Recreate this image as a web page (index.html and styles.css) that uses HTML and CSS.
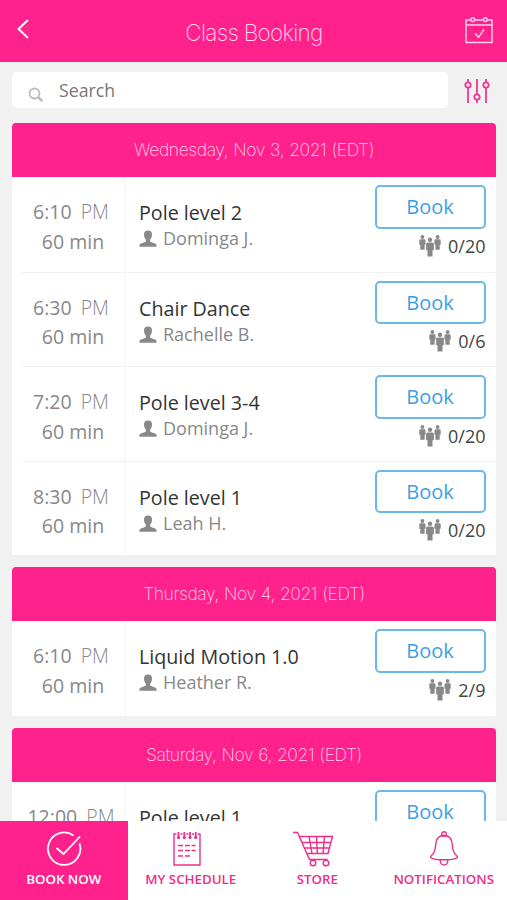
FILE: index.html
```html
<!DOCTYPE html>
<html lang="en">
<head>
    <meta charset="UTF-8">
    <meta name="viewport" content="width=device-width, initial-scale=1.0">
    <title>Class Booking</title>
    <link rel="stylesheet" href="styles.css">
</head>
<body>
    <svg class="icon-defs">
        <symbol id="person" viewBox="0 0 18 17">
            <path d="M9 .5C6.200.5 4.900 2 5 4.800c.1 2.200.7 3.600 1.800 4.600v2.300L2 13.500C.7 14.100.3 14.800.3 16.700h17.400c0-1.900-.4-2.600-1.700-3.200l-4.800-1.800V9.400c1.100-1 1.700-2.400 1.800-4.600C13.100 2 11.800.5 9 .5z"/>
        </symbol>
        <symbol id="group" viewBox="0 0 22 22">
            <circle cx="3.400" cy="2" r="1.900"/>
            <circle cx="18.600" cy="2" r="1.900"/>
            <circle cx="11" cy="4.800" r="2.200"/>
            <path d="M1.500 4.200h3.800q1.200 0 1.200 1.300v4.300H5.600v5H1.300v-5H.3V5.500q0-1.300 1.200-1.300z"/>
            <path d="M16.700 4.200h3.800q1.200 0 1.200 1.300v4.300h-1v5h-4.300v-5h-.9V5.500q0-1.300 1.200-1.300z"/>
            <path d="M8.600 7.500h4.800q1.500 0 1.500 1.500v6.200h-1.400v6.300h-5v-6.300H7.100V9q0-1.500 1.500-1.500z"/>
        </symbol>
    </svg>

    <div class="app">
        <header class="top-bar">
            <svg class="back-icon" viewBox="0 0 12 20"><path d="M11 1L1.500 10 11 19"/></svg>
            <h1>Class Booking</h1>
            <svg class="calendar-icon" viewBox="0 0 28 28">
                <path d="M5.500 4H1v22.500h26V4h-4.500M10 4h8M1 9h26M10 17.300l3.500 4 5.500-8"/>
                <circle cx="7.700" cy="3.600" r="1.900"/>
                <circle cx="20.300" cy="3.600" r="1.900"/>
            </svg>
        </header>

        <main class="content">
            <div class="search-row">
                <div class="search-box">
                    <svg class="search-icon" viewBox="0 0 16 16"><circle cx="6.500" cy="6.500" r="5"/><path class="handle" d="M10.300 10.300l4 3.900"/></svg>
                    <span>Search</span>
                </div>
                <svg class="filter-icon" viewBox="0 0 26 26">
                    <path d="M4 1v3M4 9.500V25M13 1v15M13 22v3M22 1v3M22 9.500V25"/>
                    <circle cx="4" cy="7" r="2.700"/>
                    <circle cx="13" cy="19" r="2.700"/>
                    <circle cx="22" cy="7" r="2.700"/>
                </svg>
            </div>

            <section class="day">
                <h2>Wednesday, Nov 3, 2021 (EDT)</h2>
                <div class="class-row">
                    <div class="time">
                        <div>6:10 <span class="period">PM</span></div>
                        <div class="duration">60 min</div>
                    </div>
                    <div class="details">
                        <div class="name">Pole level 2</div>
                        <div class="teacher"><svg><use href="#person"/></svg>Dominga J.</div>
                    </div>
                    <div class="booking">
                        <button class="book">Book</button>
                        <div class="spots"><svg><use href="#group"/></svg>0/20</div>
                    </div>
                </div>
                <div class="class-row">
                    <div class="time">
                        <div>6:30 <span class="period">PM</span></div>
                        <div class="duration">60 min</div>
                    </div>
                    <div class="details">
                        <div class="name">Chair Dance</div>
                        <div class="teacher"><svg><use href="#person"/></svg>Rachelle B.</div>
                    </div>
                    <div class="booking">
                        <button class="book">Book</button>
                        <div class="spots"><svg><use href="#group"/></svg>0/6</div>
                    </div>
                </div>
                <div class="class-row">
                    <div class="time">
                        <div>7:20 <span class="period">PM</span></div>
                        <div class="duration">60 min</div>
                    </div>
                    <div class="details">
                        <div class="name">Pole level 3-4</div>
                        <div class="teacher"><svg><use href="#person"/></svg>Dominga J.</div>
                    </div>
                    <div class="booking">
                        <button class="book">Book</button>
                        <div class="spots"><svg><use href="#group"/></svg>0/20</div>
                    </div>
                </div>
                <div class="class-row">
                    <div class="time">
                        <div>8:30 <span class="period">PM</span></div>
                        <div class="duration">60 min</div>
                    </div>
                    <div class="details">
                        <div class="name">Pole level 1</div>
                        <div class="teacher"><svg><use href="#person"/></svg>Leah H.</div>
                    </div>
                    <div class="booking">
                        <button class="book">Book</button>
                        <div class="spots"><svg><use href="#group"/></svg>0/20</div>
                    </div>
                </div>
            </section>

            <section class="day">
                <h2>Thursday, Nov 4, 2021 (EDT)</h2>
                <div class="class-row">
                    <div class="time">
                        <div>6:10 <span class="period">PM</span></div>
                        <div class="duration">60 min</div>
                    </div>
                    <div class="details">
                        <div class="name">Liquid Motion 1.0</div>
                        <div class="teacher"><svg><use href="#person"/></svg>Heather R.</div>
                    </div>
                    <div class="booking">
                        <button class="book">Book</button>
                        <div class="spots"><svg><use href="#group"/></svg>2/9</div>
                    </div>
                </div>
            </section>

            <section class="day">
                <h2>Saturday, Nov 6, 2021 (EDT)</h2>
                <div class="class-row">
                    <div class="time">
                        <div>12:00 <span class="period">PM</span></div>
                    </div>
                    <div class="details">
                        <div class="name">Pole level 1</div>
                    </div>
                    <div class="booking">
                        <button class="book">Book</button>
                    </div>
                </div>
            </section>
        </main>

        <nav class="tabs">
            <div class="tab active">
                <svg viewBox="0 0 36 36">
                    <path class="thick" d="M27.500 4.500A16.200 16.200 0 1 0 33.500 12.500M10.500 17l7 6L34 5.500"/>
                </svg>
                BOOK NOW
            </div>
            <div class="tab">
                <svg class="schedule" viewBox="0 0 36 36">
                    <path d="M7.500 3H5v31h26V3h-2.300M11.500 3h2M17.300 3h2M23 3h2"/>
                    <path class="thick" d="M9.500 1v6M15.300 1v6M21 1v6M26.700 1v6"/>
                    <circle class="dot" cx="9.500" cy="6.500" r="1.600"/>
                    <circle class="dot" cx="15.300" cy="6.500" r="1.600"/>
                    <circle class="dot" cx="21" cy="6.500" r="1.600"/>
                    <circle class="dot" cx="26.700" cy="6.500" r="1.600"/>
                    <path d="M9 14.500h5M16 14.500h5M22.500 14.500h4M9 19.500h5M16 19.500h5M22.500 19.500h4M9 25h5M16 25h5"/>
                </svg>
                MY SCHEDULE
            </div>
            <div class="tab">
                <svg class="cart" viewBox="0 0 42 36">
                    <path d="M1 1.500h4.500l12 27h18M7.500 5.500h33l-4.500 17H15M10 11.500h29M12.500 17h25M17 5.500l3 17M24.500 5.500l.8 17M32.500 5.500l-1.500 17"/>
                    <circle cx="21" cy="32" r="2.800"/>
                    <circle cx="34" cy="32" r="2.800"/>
                </svg>
                STORE
            </div>
            <div class="tab">
                <svg viewBox="0 0 36 36">
                    <path d="M18 4.500c-6 0-8 4-8.300 9-.3 7-2.200 9-5.200 12.200 0 2 6.500 3 13.500 3s13.500-1 13.500-3c-3-3.200-4.900-5.200-5.200-12.200-.3-5-2.300-9-8.300-9zM14.300 29v1.500q.5 3.500 3.700 3.500t3.700-3.500V29"/>
                    <circle cx="18" cy="3" r="2.300"/>
                </svg>
                NOTIFICATIONS
            </div>
        </nav>
    </div>
</body>
</html>
```

FILE: styles.css
```css
* {
    box-sizing: border-box;
    padding: 0;
    margin: 0;
}

body {
    font-family: "Open Sans", sans-serif;
    background-color: #f1f1f1;
    color: #333;
}

svg {
    fill: none;
    stroke: currentColor;
    flex-shrink: 0;
}

.icon-defs {
    display: none;
}

.app {
    display: flex;
    flex-direction: column;
    height: 100vh;
    overflow: hidden;
}

.top-bar {
    display: flex;
    flex: none;
    align-items: center;
    justify-content: space-between;
    height: 61.5px;
    padding: 3px 14px 0 17px;
    background-color: #ff218c;
    color: #ffd5ed;
}

.back-icon {
    width: 12px;
    height: 20px;
    margin-top: -7px;
    stroke-width: 2;
    color: #fff;
}

.calendar-icon {
    width: 28px;
    height: 28px;
    stroke-width: 1.4;
    margin-top: -4px;
}

h1, h2 {
    font-family: Inter, "Liberation Sans", sans-serif;
    font-weight: 200;
}

h1 {
    font-size: 22.5px;
    letter-spacing: -0.7px;
    margin-left: 14px;
}

.content {
    flex: 1;
    min-height: 0;
    overflow: hidden;
    padding: 10.5px 11px 0 12px;
}

.search-row {
    display: flex;
    align-items: center;
    justify-content: space-between;
    margin-bottom: 15px;
    padding-right: 6px;
}

.search-box {
    display: flex;
    align-items: center;
    width: 436px;
    height: 36px;
    padding-left: 16px;
    border-radius: 5px;
    background-color: #fff;
    color: #777;
    font-size: 17.7px;
}

.search-icon {
    width: 16px;
    height: 16px;
    margin: 9px 15px 0 0;
    color: #bbb;
    stroke-width: 1.8;
}

.search-icon .handle {
    stroke-width: 2.5;
}

.filter-icon {
    width: 26px;
    height: 26px;
    margin-top: 1px;
    color: #ee3a8f;
    stroke-width: 1.8;
}

.day {
    margin-bottom: 12px;
    border-radius: 4px 4px 2px 2px;
    overflow: hidden;
    background-color: #fff;
}

h2 {
    height: 54px;
    line-height: 53px;
    background-color: #ff218c;
    color: #ffd0eb;
    font-size: 17.5px;
    letter-spacing: -0.42px;
    word-spacing: 0.6px;
    text-align: center;
}

.class-row {
    display: flex;
    height: 94.5px;
    margin-left: 10px;
}

.class-row + .class-row {
    border-top: 1px solid #f0f2f2;
}

.time {
    width: 103px;
    padding: 20px 4px 0 0;
    border-right: 1px solid #f3f4f5;
    font-size: 19.5px;
    line-height: 29.5px;
    text-align: center;
    color: #888;
}

.period {
    margin-left: 4px;
    font-weight: 300;
}

.duration {
    padding-left: 4px;
}

.details {
    flex: 1;
    padding: 23px 0 0 14px;
}

.name {
    font-size: 19.7px;
    line-height: 26px;
}

.teacher {
    display: flex;
    align-items: center;
    font-size: 18px;
    line-height: 24px;
    color: #888;
}

.teacher svg {
    width: 18px;
    height: 17px;
    margin: 1px 6px 0 0;
    fill: #888;
    stroke: none;
}

.booking {
    width: 111px;
    margin-right: 10.5px;
    padding-top: 8px;
}

.book {
    display: block;
    width: 111px;
    height: 43.5px;
    border: 2px solid #6ab8ea;
    border-radius: 5px;
    background-color: #fff;
    color: #3c9fe3;
    font-family: inherit;
    font-size: 20px;
}

.spots {
    display: flex;
    align-items: center;
    justify-content: flex-end;
    margin-top: 4px;
    font-size: 18px;
    line-height: 26px;
    color: #444;
}

.spots svg {
    width: 22px;
    height: 22px;
    margin-right: 7px;
    fill: #888;
    stroke: none;
}

.tabs {
    display: grid;
    grid-template-columns: 127.5px 126.5px 126.5px 126.5px;
    flex: none;
    height: 79.5px;
    background-color: #fff;
}

.tab {
    display: flex;
    flex-direction: column;
    align-items: center;
    padding-top: 10px;
    font-size: 13.3px;
    font-weight: 600;
    line-height: 24px;
    white-space: nowrap;
    color: #ed2f89;
}

.tab svg {
    width: 36px;
    height: 36px;
    stroke-width: 1.4;
}

.tab svg.schedule {
    margin-right: 7px;
}

.tab svg.cart {
    width: 42px;
    margin-right: 8px;
}

.tab svg .thick {
    stroke-width: 1.8;
}

.tab svg .dot {
    fill: currentColor;
    stroke: none;
}

.tab.active {
    background-color: #ff218c;
    color: #fff;
}
```
